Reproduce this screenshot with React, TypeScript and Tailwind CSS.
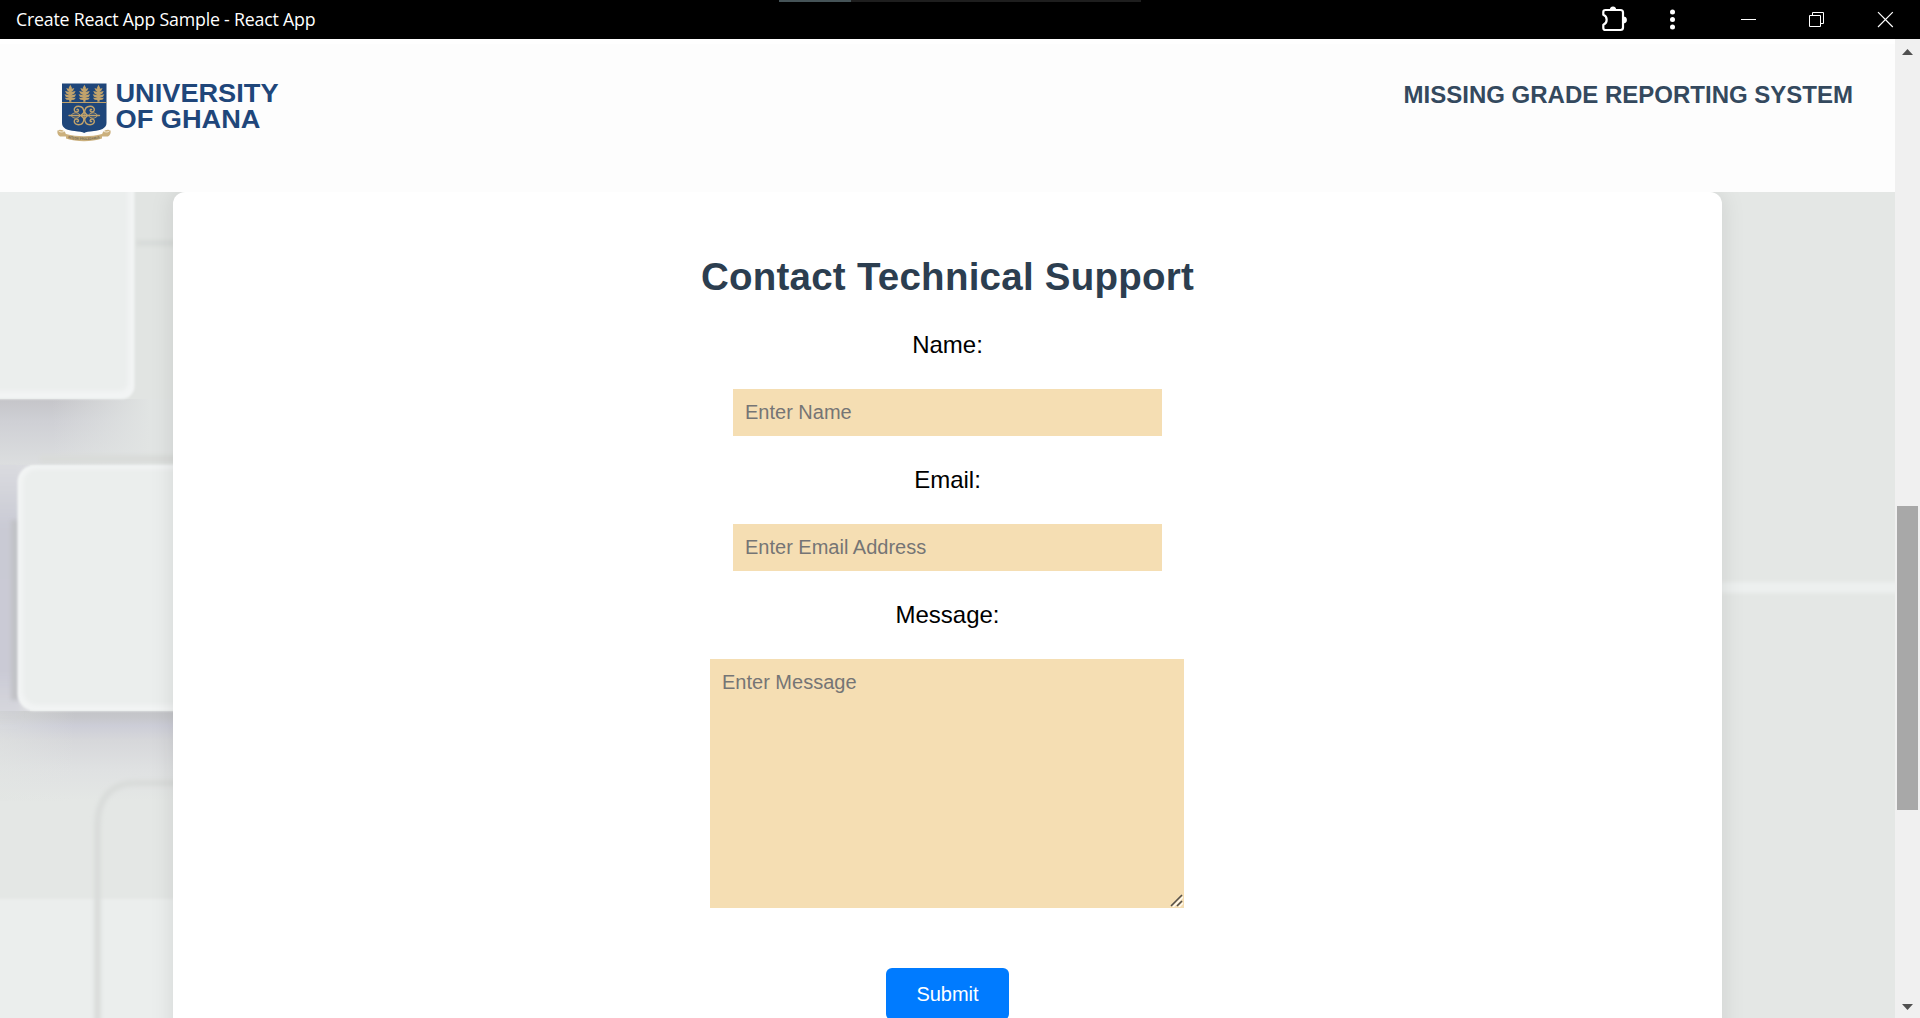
import React from "react";

function Tree({ x }: { x: number }) {
  return (
    <g transform={`translate(${x} 84.8) scale(1.12 1.02)`} fill="#c2a36b">
      <path d="M0 0 L1.6 3.4 L0.9 4.2 L3.6 3.2 L2.6 5.6 L0.9 7 L4.7 6 L3.6 8.5 L0.9 10.2 L5.2 9.2 L4 11.7 L0.9 13 L5 12.6 L3.4 14.6 L1 15 L1 16.6 L-1 16.6 L-1 15 L-3.4 14.6 L-5 12.6 L-0.9 13 L-4 11.7 L-5.2 9.2 L-0.9 10.2 L-3.6 8.5 L-4.7 6 L-0.9 7 L-2.6 5.6 L-3.6 3.2 L-0.9 4.2 L-1.6 3.4 Z" />
    </g>
  );
}

function Logo() {
  return (
    <svg className="block h-[64px] w-[230px]" viewBox="54 80 230 64" aria-label="University of Ghana">
      <path d="M62 83.5 H106.5 V123 C106.5 128.5 100 130.5 94 131 C89 131.5 86 132 84.2 133 C82.400 132 79 131.500 74.500 131 C68 130.500 62 128.500 62 123 Z" fill="#1f467a" />
      <Tree x={70.3} />
      <Tree x={84.4} />
      <Tree x={98.5} />
      <rect x="62" y="102" width="44.500" height="1" fill="#c2a36b" />
      <g fill="none" stroke="#c2a36b" strokeWidth="1.400" strokeLinecap="round">
        <path d="M69 115.500 H99.500" />
        <path d="M84.300 112 L87.500 115.500 L84.300 119 L81 115.500 Z" />
        <path d="M84 113 C84 108 81.500 106.300 78.500 106.300 C75.500 106.300 74 108.300 74.300 110.200 C74.700 112.500 78.200 112.700 78.500 110.400 C78.600 109.300 77.500 109 77 109.700" />
        <path d="M84.600 113 C84.600 108 87.100 106.300 90.100 106.300 C93.100 106.300 94.600 108.300 94.300 110.200 C93.900 112.500 90.400 112.700 90.100 110.400 C90 109.300 91.100 109 91.600 109.700" />
        <path d="M84 118 C84 123 81.500 124.700 78.500 124.700 C75.500 124.700 74 122.700 74.300 120.800 C74.700 118.500 78.200 118.300 78.500 120.600 C78.600 121.700 77.500 122 77 121.300" />
        <path d="M84.600 118 C84.600 123 87.100 124.700 90.100 124.700 C93.100 124.700 94.600 122.700 94.300 120.800 C93.900 118.500 90.400 118.300 90.100 120.600 C90 121.700 91.100 122 91.600 121.300" />
        <path d="M80 115 C77 111.500 73 112.500 71 115.300 M80 116 C77 119.500 73 118.500 71 115.700 M88.600 115 C91.600 111.500 95.600 112.500 97.600 115.300 M88.600 116 C91.600 119.500 95.600 118.500 97.600 115.700" strokeWidth="1" />
      </g>
      <circle cx="84.300" cy="115.500" r="1.200" fill="#c2a36b" />
      <path d="M57.500 130.500 C60 129 63 130 65 132 L67 136.500 L60 136.500 C57.500 135 57 132.500 57.500 130.500 Z M110.500 130.500 C108 129 105 130 103 132 L101 136.500 L108 136.500 C110.500 135 111 132.500 110.500 130.500 Z" fill="#cbb07d" />
      <path d="M58.500 130.800 C60 132.500 62.500 132 64 131.500 M109.500 130.800 C108 132.500 105.500 132 104 131.500" fill="none" stroke="#f5ecd9" strokeWidth="1" />
      <path d="M66 134 C77 137 91 137 102 134 V138.500 C91 142 77 142 66 138.500 Z" fill="#cbb07d" />
      <path id="motto" d="M68 138.300 C78 140.600 90 140.600 100.500 138.300" fill="none" />
      <text fontFamily="Liberation Sans" fontSize="3.600" fontWeight="700" fill="#6f654f">
        <textPath href="#motto" textLength="32" lengthAdjust="spacingAndGlyphs">INTEGRI PROCEDAMUS</textPath>
      </text>
      <g fontFamily="Liberation Sans" fontWeight="700" fontSize="25" fill="#1f467a">
        <text x="115.500" y="102" textLength="163" lengthAdjust="spacingAndGlyphs">UNIVERSITY</text>
        <text x="115.500" y="127.700" textLength="145" lengthAdjust="spacingAndGlyphs">OF GHANA</text>
      </g>
    </svg>
  );
}

function Backdrop() {
  return (
    <svg className="absolute inset-0 h-[826px] w-[1895px]" viewBox="0 192 1895 826" aria-hidden="true">
      <defs>
        <filter id="b1" x="-50%" y="-50%" width="200%" height="200%"><feGaussianBlur stdDeviation="1" /></filter>
        <filter id="b2" x="-50%" y="-50%" width="200%" height="200%"><feGaussianBlur stdDeviation="2" /></filter>
        <linearGradient id="under" x1="0" y1="0" x2="0" y2="1">
          <stop offset="0" stopColor="#c5c5c9" />
          <stop offset="0.350" stopColor="#cfd0d5" />
          <stop offset="1" stopColor="#dcdedf" />
        </linearGradient>
        <linearGradient id="fadeRight" x1="0" y1="0" x2="1" y2="0">
          <stop offset="0.350" stopColor="#e1e4e3" stopOpacity="0" />
          <stop offset="1" stopColor="#e1e4e3" />
        </linearGradient>
        <linearGradient id="side" x1="0" y1="0" x2="0" y2="1">
          <stop offset="0" stopColor="#c9cad4" stopOpacity="0" />
          <stop offset="0.250" stopColor="#c9cad4" />
          <stop offset="0.780" stopColor="#cacad5" />
          <stop offset="1" stopColor="#cacad5" stopOpacity="0" />
        </linearGradient>
        <linearGradient id="below" x1="0" y1="0" x2="0" y2="1">
          <stop offset="0" stopColor="#c3c4c7" />
          <stop offset="0.070" stopColor="#c6c7cb" />
          <stop offset="0.160" stopColor="#cccdd7" />
          <stop offset="0.320" stopColor="#d6d7da" />
          <stop offset="0.650" stopColor="#dfe1e2" />
          <stop offset="1" stopColor="#e4e7e5" />
        </linearGradient>
        <linearGradient id="fadeLeft" x1="0" y1="0" x2="1" y2="0">
          <stop offset="0" stopColor="#e2e5e3" />
          <stop offset="1" stopColor="#e2e5e3" stopOpacity="0" />
        </linearGradient>
      </defs>
      <rect y="192" width="1895" height="826" fill="#e4e7e5" />
      <rect y="192" width="200" height="400" fill="#e1e4e2" />
      <rect x="136" y="240" width="40" height="6" fill="#d8dbd9" filter="url(#b2)" />
      <rect y="399" width="200" height="66" fill="url(#under)" />
      <rect y="399" width="150" height="66" fill="url(#fadeRight)" />
      <rect x="150" y="399" width="30" height="66" fill="#e1e4e3" />
      <rect x="40" y="455" width="150" height="8" fill="#d9dbd9" filter="url(#b2)" />
      <rect x="-20" y="150" width="154.500" height="249" rx="13" fill="#f2f4f4" filter="url(#b1)" />
      <rect x="-20" y="150" width="148" height="241" rx="8" fill="#ebeeed" filter="url(#b2)" />
      <rect y="465" width="30" height="246" fill="#dadbdf" />
      <rect y="711" width="200" height="90" fill="url(#below)" />
      <rect y="711" width="75" height="90" fill="url(#fadeLeft)" opacity="0.500" />
      <rect x="-20" y="465" width="40" height="262" fill="url(#side)" filter="url(#b2)" />
      <rect x="11" y="520" width="8" height="180" fill="#c1c2c6" filter="url(#b2)" />
      <rect x="17.500" y="465" width="220" height="246" rx="17" fill="#f2f4f4" filter="url(#b1)" />
      <rect x="23" y="469" width="220" height="236" rx="14" fill="#ebeeed" filter="url(#b2)" />
      <rect x="-100" y="899" width="400" height="240" fill="#ebeeed" filter="url(#b1)" />
      <path d="M97.500 1030 V825 C97.500 798 112 783 135 783 H200" fill="none" stroke="#d9dcda" strokeWidth="6.500" filter="url(#b2)" />
      <rect x="1600" y="582" width="400" height="11" fill="#edf0ef" filter="url(#b2)" />
    </svg>
  );
}

function TitleBar() {
  return (
    <div className="relative flex h-[39px] shrink-0 items-center bg-black text-white">
      <span className="pl-4 font-['Open_Sans','Noto_Sans',sans-serif] text-[17.75px] leading-[39px] tracking-[-0.2px] whitespace-nowrap">
        Create React App Sample - React App
      </span>
      <div className="absolute top-0 left-[779px] flex h-[2px] w-[362px] bg-[#1e1e1e]">
        <div className="w-[72px] bg-[#455357]" />
      </div>
      <svg className="ml-auto h-[39px] w-[320px]" viewBox="1600 0 320 39" fill="none" stroke="#fff">
        <path d="M1605.500 10 H1620.500 Q1623 10 1623 12.500 V27.500 Q1623 30 1620.500 30 H1605.500 Q1603.300 30 1603.300 28 V24.800 C1607.800 23 1607.800 16.500 1603.300 14.800 V12 Q1603.300 10 1605.500 10 Z" strokeWidth="2.200" strokeLinejoin="round" />
        <path d="M1609.800 10 a3.200 3.600 0 0 1 6.400 0 Z M1623 16.500 a3.800 3.300 0 0 1 0 6.800 Z" fill="#fff" stroke="none" />
        <g fill="#fff" stroke="none">
          <circle cx="1672.500" cy="12" r="2.500" />
          <circle cx="1672.500" cy="19.500" r="2.500" />
          <circle cx="1672.500" cy="27" r="2.500" />
        </g>
        <path d="M1741 19.500 H1756" />
        <path d="M1809.500 15.500 H1820.500 V26.500 H1809.500 Z M1812.500 15.500 V12.500 H1823.500 V23.500 H1820.500" />
        <path d="M1878 12.200 L1892.800 27 M1892.800 12.200 L1878 27" strokeWidth="1.200" />
      </svg>
    </div>
  );
}

function Scrollbar() {
  return (
    <div className="flex w-[25px] shrink-0 flex-col items-center bg-[#f0f0f0]">
      <svg className="mt-[10px] h-[6px] w-[11px]" viewBox="0 0 11 6"><path d="M5.500 0 L11 6 H0 Z" fill="#505050" /></svg>
      <div className="mt-[451px] h-[304px] w-[21px] bg-[#a8a8a8]" />
      <svg className="mt-[194px] h-[6px] w-[11px]" viewBox="0 0 11 6"><path d="M0 0 H11 L5.500 6 Z" fill="#505050" /></svg>
    </div>
  );
}

const fieldClass =
  "block bg-[#f5deb3] px-[12px] text-[20px] text-black outline-none placeholder:text-[#757575] placeholder:opacity-100";

export default function App() {
  return (
    <div className="flex h-[1018px] w-[1920px] flex-col overflow-hidden font-['Liberation_Sans',Arial,sans-serif]">
      <TitleBar />
      <div className="flex min-h-0 flex-1">
        <main className="flex w-[1895px] flex-col">
          <header className="flex h-[153px] shrink-0 items-start justify-between border-t-[5px] border-white bg-[#fdfdfd] pr-[42px] pl-[54px]">
            <div className="pt-[36px]"><Logo /></div>
            <h1 className="pt-[37px] text-[24px] leading-[28px] font-bold whitespace-nowrap text-[#34495e]">
              MISSING GRADE REPORTING SYSTEM
            </h1>
          </header>
          <section className="relative flex min-h-0 flex-1 justify-center overflow-hidden">
            <Backdrop />
            <form
              className="relative flex h-[900px] w-[1549px] shrink-0 flex-col items-center rounded-[12px] bg-white pt-[62px] shadow-[0_0_25px_rgba(0,0,0,0.1)]"
              onSubmit={(e) => e.preventDefault()}
            >
              <h2 className="text-[38.5px] leading-[46px] font-bold tracking-[0.25px] text-[#2c3e50]">Contact Technical Support</h2>
              <label htmlFor="name" className="mt-[30px] text-[24px] leading-[30px]">Name:</label>
              <input id="name" placeholder="Enter Name" className={`${fieldClass} mt-[29px] h-[47px] w-[429px]`} />
              <label htmlFor="email" className="mt-[29px] text-[24px] leading-[30px]">Email:</label>
              <input id="email" placeholder="Enter Email Address" className={`${fieldClass} mt-[29px] h-[47px] w-[429px]`} />
              <label htmlFor="message" className="mt-[29px] text-[24px] leading-[30px]">Message:</label>
              <div className="relative mt-[29px] mr-[1px] h-[249px] w-[474px]">
                <textarea id="message" placeholder="Enter Message" className={`${fieldClass} h-full w-full resize-none py-[12px] leading-[23px]`} />
                <svg className="absolute right-[1px] bottom-[1px] h-[13px] w-[13px]" viewBox="0 0 13 13" fill="none">
                  <path d="M3 13 L13 3 M9 13 L13 9" stroke="#fffaf0" strokeWidth="1.500" />
                  <path d="M1 12 L12 1 M7 12 L12 7" stroke="#55504a" strokeWidth="1.600" />
                </svg>
              </div>
              <button type="submit" className="mt-[60px] h-[52px] w-[123px] rounded-[6px] bg-[#007bff] text-[20px] text-white">Submit</button>
            </form>
          </section>
        </main>
        <Scrollbar />
      </div>
    </div>
  );
}
